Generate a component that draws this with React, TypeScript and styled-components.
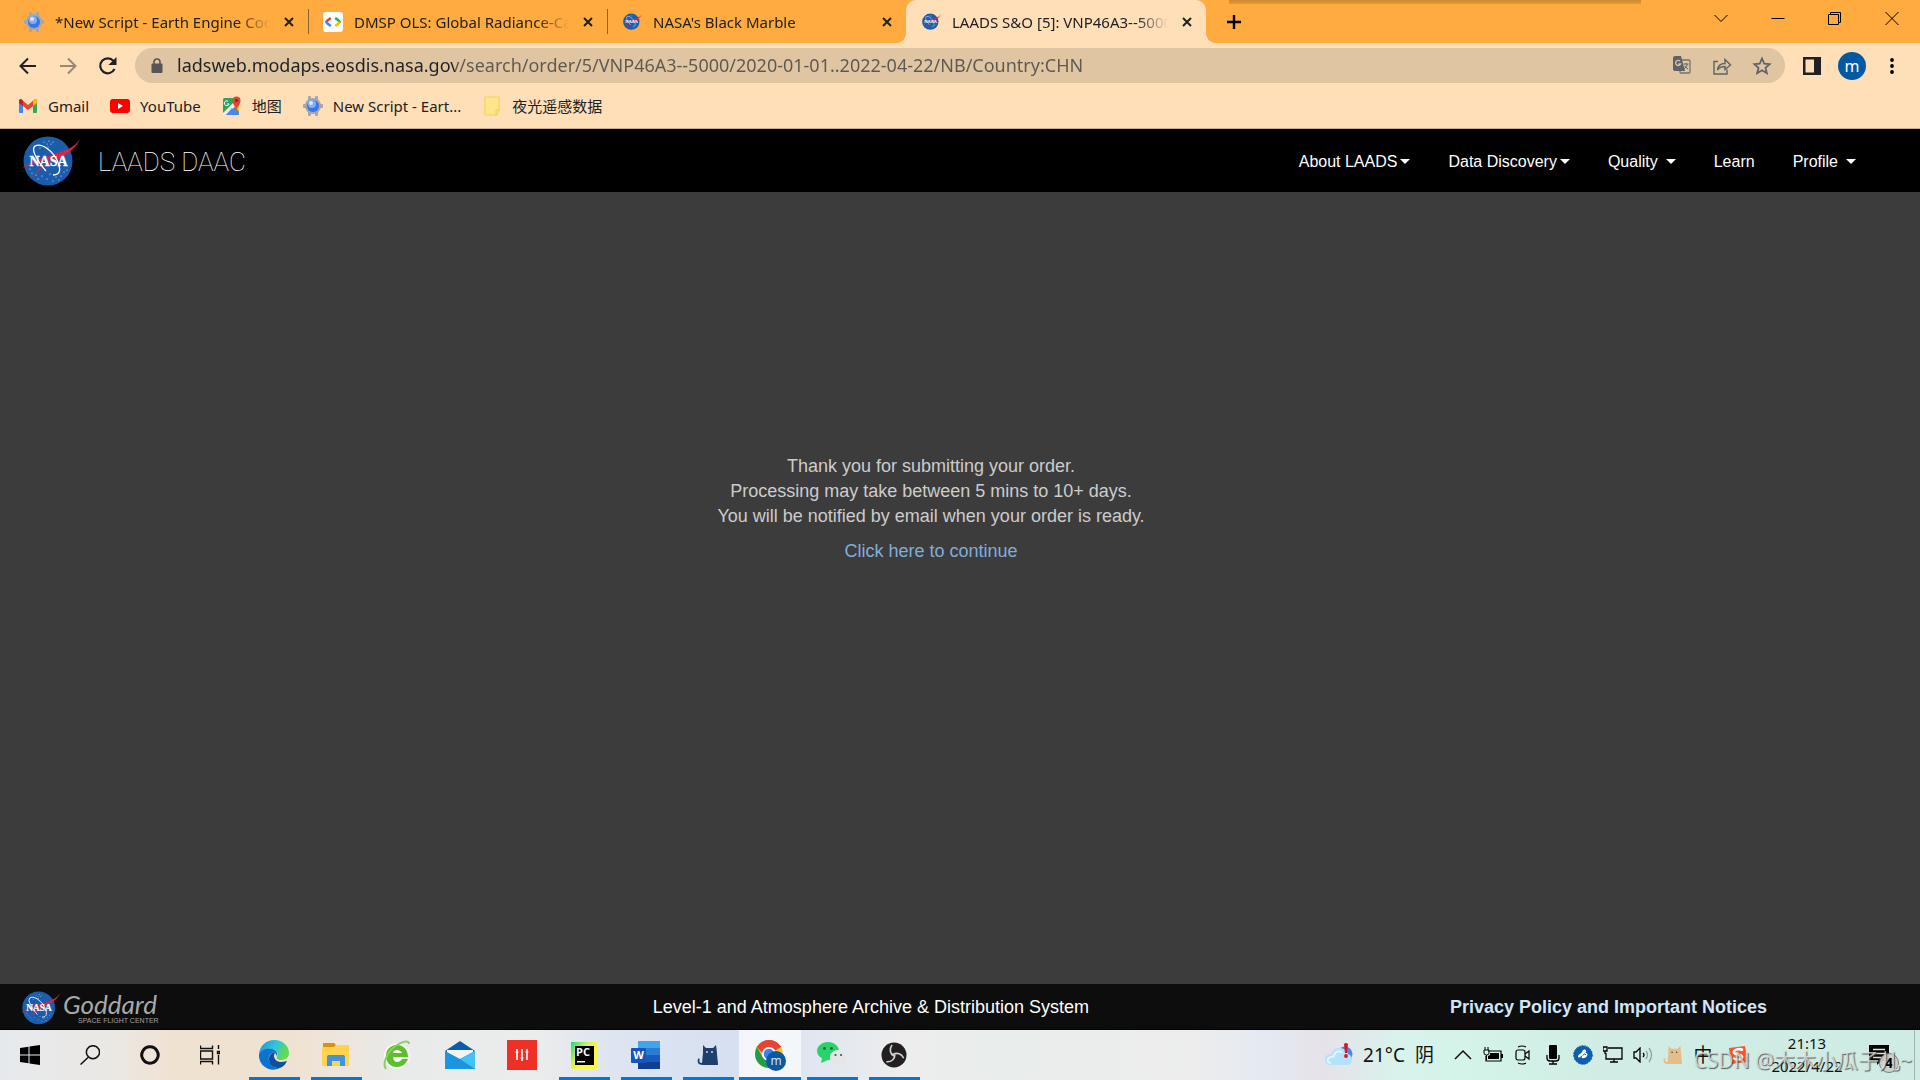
import React, { ReactNode } from "react";
import styled, { createGlobalStyle, css } from "styled-components";

const ui = `"Noto Sans", "Open Sans", "Noto Sans CJK SC", sans-serif`;
const sans = `"Liberation Sans", Arial, sans-serif`;

const GlobalStyle = createGlobalStyle`
  *, *::before, *::after { box-sizing: border-box; }
  body { margin: 0; background: #3c3c3c; font-family: ${ui}; }
  button { border: 0; padding: 0; margin: 0; background: none; font: inherit; color: inherit; cursor: pointer; }
  a { color: inherit; text-decoration: none; }
  svg { display: block; flex: none; }
`;

const Desktop = styled.div`
  position: relative;
  display: flex;
  flex-direction: column;
  min-height: 100vh;
`;

/* ---------- browser chrome ---------- */

const TabStrip = styled.div`
  position: relative;
  display: flex;
  height: 43px;
  background: #ffab40;
  padding-left: 9px;
`;

const WindowShadow = styled.div`
  position: absolute;
  top: 0;
  left: 64%;
  width: 412px;
  height: 4px;
  background: linear-gradient(#cc8833, #e59a3a);
`;

const Tab = styled.div<{ $active?: boolean; $divider?: boolean }>`
  position: relative;
  display: flex;
  align-items: center;
  width: ${(p) => (p.$active ? 300 : 299)}px;
  padding: 0 10px 0 15px;
  color: #202124;
  ${(p) =>
    p.$divider &&
    css`
      &::after {
        content: "";
        position: absolute;
        right: -1px;
        top: 9px;
        width: 1px;
        height: 25px;
        background: #8a6533;
      }
    `}
  ${(p) =>
    p.$active &&
    css`
      background: #ffdfb8;
      border-radius: 10px 10px 0 0;
      &::before,
      &::after {
        content: "";
        position: absolute;
        bottom: 0;
        width: 10px;
        height: 10px;
      }
      &::before {
        left: -10px;
        background: radial-gradient(circle at 0 0, #ffab40 10px, #ffdfb8 10px);
      }
      &::after {
        right: -10px;
        background: radial-gradient(circle at 100% 0, #ffab40 10px, #ffdfb8 10px);
      }
    `}
`;

const TabLabel = styled.button`
  display: flex;
  align-items: center;
  gap: 11px;
  flex: 1;
  min-width: 0;
  font-size: 15px;
  line-height: 20px;
  text-align: left;
`;

const TabTitle = styled.span`
  flex: 1;
  overflow: hidden;
  white-space: nowrap;
  mask-image: linear-gradient(to right, #000 calc(100% - 32px), transparent);
`;

const CloseButton = styled.button`
  display: grid;
  place-items: center;
  width: 18px;
  height: 18px;
  margin-left: 10px;
`;

const NewTab = styled.button`
  display: grid;
  place-items: center;
  width: 36px;
  margin-left: 10px;
`;

const WindowControls = styled.div`
  display: flex;
  margin-left: auto;
  height: 37px;
`;

const WindowButton = styled.button`
  display: grid;
  place-items: center;
  width: 57px;
`;

const Toolbar = styled.div`
  display: flex;
  align-items: center;
  height: 45px;
  padding: 0 8px;
  background: #ffdfb8;
  color: #202124;
`;

const ToolButton = styled.button<{ $dim?: boolean }>`
  display: grid;
  place-items: center;
  width: 40px;
  height: 35px;
  opacity: ${(p) => (p.$dim ? 0.45 : 1)};
`;

const Omnibox = styled.form`
  display: flex;
  align-items: center;
  flex: 1;
  height: 35px;
  margin: 0 7px;
  padding: 0 3px 0 16px;
  border-radius: 18px;
  background: #dfc5a2;
  color: #5f6368;
`;

const Address = styled.input`
  flex: 1;
  min-width: 0;
  height: 30px;
  margin-left: 14px;
  padding: 0 0 2px;
  border: 0;
  outline: 0;
  font-family: ${ui};
  font-size: 18px;
  background: linear-gradient(to right, #202124 278px, #5d5850 278px);
  background-clip: text;
  -webkit-text-fill-color: transparent;
`;

const Avatar = styled.span`
  display: grid;
  place-items: center;
  width: 28px;
  height: 28px;
  border-radius: 50%;
  background: #0159a3;
  color: #fff;
  font-size: 16px;
  line-height: 20px;
`;

const Bookmarks = styled.nav`
  display: flex;
  align-items: center;
  gap: 21px;
  height: 41px;
  padding: 0 18px 4px;
  background: #ffdfb8;
  border-bottom: 1px solid #c9b090;
`;

const Bookmark = styled.a`
  display: flex;
  align-items: center;
  gap: 10px;
  font-size: 15px;
  line-height: 20px;
  color: #202124;
  white-space: nowrap;
`;

/* ---------- web page ---------- */

const SiteHeader = styled.header`
  display: flex;
  align-items: center;
  justify-content: space-between;
  height: 63px;
  padding: 2px 64px 0 20px;
  background: #000;
  color: #fff;
  font-family: ${sans};
`;

const Brand = styled.a`
  display: flex;
  align-items: center;
  gap: 18px;
  font-family: Roboto, "Open Sans", sans-serif;
  font-weight: 100;
  font-size: 26px;
  line-height: 36px;
`;

const SiteNav = styled.nav`
  display: flex;
  gap: 38px;
  font-size: 16px;
  line-height: 20px;
`;

const NavItem = styled.button<{ $gap?: number }>`
  display: flex;
  align-items: center;
  gap: ${(p) => p.$gap ?? 0}px;
`;

const Caret = styled.span`
  border: 5px solid transparent;
  border-top-color: #fff;
  border-bottom: 0;
`;

const Main = styled.main`
  flex: 1;
  padding: 262px 58px 0 0;
  background: #3c3c3c;
  color: #ccc;
  font-family: ${sans};
  font-size: 18px;
  line-height: 25px;
  text-align: center;
`;

const Notice = styled.p`
  margin: 0 0 10px;
`;

const ContinueLink = styled.a`
  color: #80aed9;
`;

const SiteFooter = styled.footer`
  display: grid;
  grid-template-columns: 14fr auto 15fr;
  align-items: center;
  height: 46px;
  padding: 0 153px 0 20px;
  background: #0d0d0d;
  border-bottom: 1px solid #000;
  color: #fff;
  font-family: ${sans};
  font-size: 18px;
  line-height: 20px;
`;

const FooterLogos = styled.div`
  display: flex;
  align-items: center;
  gap: 2px;
  padding-top: 4px;
`;

const PolicyLink = styled.a`
  justify-self: end;
  font-weight: 700;
  color: #cfe5fa;
`;

/* ---------- taskbar ---------- */

const Taskbar = styled.div`
  display: flex;
  height: 50px;
  background: linear-gradient(
    to right,
    #e6e9ec 0,
    #ebe8e4 6%,
    #f0e2d1 9%,
    #f0e2d1 15%,
    #e9eaea 21%,
    #ebecec 28%,
    #dde5f1 32%,
    #d6e0f0 38%,
    #e2e8f0 43%,
    #ededed 47%,
    #e9edec 52%,
    #ededed 62%,
    #e4e9f2 66%,
    #e6e2e9 69%,
    #d8f3ec 73%,
    #d3f3e8 77%,
    #d0ece4 84%,
    #cfece4 100%
  );
  color: #111;
`;

const SystemButton = styled.button`
  display: grid;
  place-items: center;
  width: 60px;
`;

const Apps = styled.div`
  display: flex;
  margin-left: 3px;
`;

const AppButton = styled.button<{ $open?: boolean; $active?: boolean }>`
  position: relative;
  display: grid;
  place-items: center;
  width: 62px;
  background: ${(p) => (p.$active ? "rgba(255,255,255,0.68)" : "transparent")};
  &::after {
    content: "";
    position: absolute;
    bottom: 0;
    left: ${(p) => (p.$active ? 0 : 6)}px;
    right: ${(p) => (p.$active ? 0 : 5)}px;
    height: 3px;
    background: ${(p) => (p.$open ? "#0078d7" : "transparent")};
  }
`;

const Tray = styled.div`
  display: flex;
  align-items: center;
  margin-left: auto;
  padding-right: 5px;
`;

const Weather = styled.button`
  display: flex;
  align-items: center;
  gap: 10px;
  margin-right: 14px;
  font-size: 19px;
  line-height: 24px;
`;

const TrayButton = styled.button<{ $wide?: boolean }>`
  display: grid;
  place-items: center;
  width: ${(p) => (p.$wide ? 40 : 30)}px;
  height: 50px;
`;

const InputMode = styled.span`
  font-size: 19px;
  line-height: 24px;
`;

const Clock = styled.button`
  width: 98px;
  font-size: 15px;
  line-height: 23px;
`;

const ActionCenter = styled.button`
  display: flex;
  align-items: center;
  justify-content: center;
  width: 59px;
  height: 50px;
  border-right: 1px solid #9fb5af;
`;

const Watermark = styled.div`
  position: absolute;
  right: 8px;
  bottom: 6px;
  font-size: 21px;
  line-height: 28px;
  color: rgba(225, 232, 230, 0.75);
  text-shadow: 1px 1px 1px rgba(60, 60, 60, 0.8);
  pointer-events: none;
  white-space: nowrap;
`;

/* ---------- drawings ---------- */

const NasaLogo = ({ w, h }: { w: number; h: number }) => (
  <svg width={w} height={h} viewBox="0 0 60 52" aria-hidden="true">
    <circle cx="28" cy="25" r="24.5" fill="#1c5dab" />
    <g fill="#dbe7f5">
      {[
        [24, 6], [29, 5], [31, 8], [28, 11], [33, 6], [27, 8], [20, 12], [12, 37], [16, 39], [22, 40],
        [27, 43], [33, 45], [36, 41], [41, 40], [44, 36], [18, 43], [39, 44], [30, 38], [10, 33], [47, 34],
      ].map(([x, y]) => (
        <circle key={`${x}-${y}`} cx={x} cy={y} r="0.6" />
      ))}
    </g>
    <path d="M60 3C54 13 45 19 30 23C18 26 8 29 1 33C9 27 19 23 32 19C45 15 54 12 60 3Z" fill="#e8213c" />
    <path d="M60 3C57 11 47 19 34 25C22 31 12 39 7 47C14 36 22 30 33 23C45 16 55 12 60 3Z" fill="#e8213c" />
    <path d="M26 35C19 27 10 14 15 10C22 6 33 16 37 24C41 33 41 39 33 39" fill="none" stroke="#fff" strokeWidth="1.3" />
    <text x="28.5" y="30" textAnchor="middle" fontFamily="Liberation Serif, serif" fontWeight="700" fontSize="14" fill="#fff" stroke="#fff" strokeWidth="0.3">
      NASA
    </text>
  </svg>
);

const EarthEngine = () => (
  <svg width="20" height="22" viewBox="0 0 20 22" aria-hidden="true">
    <g fill="#a3a6ac">
      <circle cx="10" cy="11" r="8" />
      <rect x="5" y="1" width="3" height="20" rx="1" />
      <rect x="12" y="1" width="3" height="20" rx="1" />
      <rect x="0" y="9" width="20" height="4" rx="1" />
    </g>
    <circle cx="10" cy="11" r="6" fill="#3975e8" />
    <circle cx="9" cy="9" r="4" fill="#7fb0fb" />
    <circle cx="8" cy="8" r="2" fill="#d5e6ff" />
  </svg>
);

const DevSite = () => (
  <svg width="20" height="20" viewBox="0 0 20 20" aria-hidden="true">
    <rect width="20" height="20" rx="3" fill="#fff" />
    <g fill="none" strokeWidth="2.6">
      <path d="M7.8 6L4.8 8.2L3 10" stroke="#ea4335" />
      <path d="M2.6 9.2L4.8 11.8L7.8 14" stroke="#4285f4" />
      <path d="M12.2 6L15.2 8.2L17.4 10.8" stroke="#34a853" />
      <path d="M16.8 10L15.2 11.8L12.2 14" stroke="#fbbc04" />
    </g>
  </svg>
);

const Cross = () => (
  <svg width="10" height="10" viewBox="0 0 10 10" aria-hidden="true">
    <path d="M1 1L9 9M9 1L1 9" stroke="#202124" strokeWidth="2" />
  </svg>
);

const Line = ({ d, s = 20, w = 2, fill = "none" }: { d: string; s?: number; w?: number; fill?: string }) => (
  <svg width={s} height={s} viewBox="0 0 20 20" aria-hidden="true">
    <path d={d} fill={fill} stroke="currentColor" strokeWidth={w} />
  </svg>
);

const Gmail = () => (
  <svg width="20" height="16" viewBox="0 0 20 16" aria-hidden="true">
    <path d="M1 3V14Q1 15 2 15H5V6Z" fill="#4285f4" />
    <path d="M19 3V14Q19 15 18 15H15V6Z" fill="#34a853" />
    <path d="M1 3Q1 1 3 1L10 7L17 1Q19 1 19 3V5L10 12L1 5Z" fill="#ea4335" />
    <path d="M15 3L17 1Q19 1 19 3V5L15 8Z" fill="#fbbc04" />
    <path d="M1 5V3Q1 1 3 1L5 3V8Z" fill="#c5221f" />
  </svg>
);

const YouTube = () => (
  <svg width="20" height="14" viewBox="0 0 20 14" aria-hidden="true">
    <rect width="20" height="14" rx="3" fill="#f00" />
    <path d="M8 4L13 7L8 10Z" fill="#fff" />
  </svg>
);

const Maps = () => (
  <svg width="20" height="20" viewBox="0 0 20 20" aria-hidden="true">
    <rect x="1" y="2" width="16" height="17" rx="1.5" fill="#2fa35c" />
    <path d="M2 19L10 10L17 17V19Z" fill="#4a86ee" />
    <path d="M1 17L15 3L18 6L4 19H1Z" fill="#f3efe4" />
    <path d="M4 19L10 12L16 19Z" fill="#4a86ee" />
    <path d="M6 5.2A2.4 2.4 0 1 0 7 8H5" fill="none" stroke="#fff" strokeWidth="1" />
    <path d="M12 10L17 16V10L14 8Z" fill="#f4b83a" />
    <path d="M14.5 14C14 10 10.5 9 10.5 4.5A4 4 0 0 1 18.5 4.5C18.5 9 15 10 14.5 14Z" fill="#e04536" />
    <circle cx="14.5" cy="4.5" r="1.4" fill="#8c1d14" />
  </svg>
);

const Note = () => (
  <svg width="20" height="20" viewBox="0 0 20 20" aria-hidden="true">
    <path d="M3 1H17V14L15 19H3Z" fill="#ffe58a" stroke="#f2cf55" />
    <path d="M14 19V14H17" fill="none" stroke="#f2cf55" />
  </svg>
);

const Translate = () => (
  <svg width="18" height="19" viewBox="0 0 18 19" aria-hidden="true">
    <rect x="7" y="4" width="10" height="13" rx="1" fill="none" stroke="#77736b" strokeWidth="1.3" />
    <path d="M2 0H8L12 15H2Q0 15 0 13V2Q0 0 2 0Z" fill="#5f6368" />
    <path d="M7 5A2.6 2.6 0 1 0 7.6 8H5.4" fill="none" stroke="#dfc5a2" strokeWidth="1.3" />
    <path d="M10.5 8H15.5M13 7V8M14.5 8Q13.5 11 11 13M11.5 10L15 13" fill="none" stroke="#5f6368" />
  </svg>
);

const Goddard = () => (
  <svg width="98" height="40" viewBox="0 0 98 40" aria-hidden="true">
    <text x="1" y="25" fontFamily="Lato, sans-serif" fontStyle="italic" fontWeight="400" fontSize="26" fill="#a8a8a8">
      Goddard
    </text>
    <text x="16" y="34" fontFamily="Liberation Sans, sans-serif" fontSize="7" fill="#a0a0a0">
      SPACE FLIGHT CENTER
    </text>
  </svg>
);

const WindowsLogo = () => (
  <svg width="20" height="20" viewBox="0 0 20 20" aria-hidden="true">
    <path d="M0 3L8.5 1.8V9.5H0ZM9.5 1.6L20 0V9.5H9.5ZM0 10.5H8.5V18.2L0 17ZM9.5 10.5H20V20L9.5 18.4Z" />
  </svg>
);

const Edge = () => (
  <svg width="30" height="30" viewBox="0 0 30 30" aria-hidden="true">
    <defs>
      <linearGradient id="edgeTop" x1="0" x2="1" y2="0.4">
        <stop offset="0" stopColor="#1693d8" />
        <stop offset="0.55" stopColor="#2fc3df" />
        <stop offset="1" stopColor="#63dc4d" />
      </linearGradient>
    </defs>
    <path d="M0 14C1 5 8 0 15 0C24 0 30 6 30 13C30 18 26 20 22 20C18 20 17 18 18 16C20 13 17 9 12 9C6 9 1 12 0 14Z" fill="url(#edgeTop)" />
    <path d="M0 14C2 10 7 8 12 9C16 9 19 12 18 16L16 13C12 12 9 16 10 20C11 26 17 29 21 28C11 33 -1 26 0 14Z" fill="#0c72cf" />
    <path d="M10 19C10 15 13 12 16 13C13 17 17 22 22 22C25 22 27 21 28 21C26 26 21 29 18 28C13 27 10 24 10 19Z" fill="#0f4f9e" />
  </svg>
);

const Explorer = () => (
  <svg width="28" height="24" viewBox="0 0 28 24" aria-hidden="true">
    <path d="M1 0H12L14 2L12 5H1Z" fill="#d9930b" />
    <path d="M0 4H12L14 2H27V23H0Z" fill="#ffd24f" />
    <path d="M5 23V14Q5 12 7 12H21Q23 12 23 14V23H18V18H10V23Z" fill="#3f95dd" />
  </svg>
);

const GreenBrowser = () => (
  <svg width="30" height="30" viewBox="0 0 30 30" aria-hidden="true">
    <circle cx="14" cy="16" r="13" fill="#f7faf5" />
    <path d="M19 19H25C23 24 19 27 14 27C7 27 3 22 3 16C3 9 8 5 14 5C21 5 25 10 25 17H10C10 20 12 22 14 22C16 22 18 21 19 19ZM10 13H19C18 11 16 10 14 10C12 10 10 11 10 13Z" fill="#5bc02b" />
    <path d="M3 29C-1 24 4 11 14 5C20 1 26 0 26 4" fill="none" stroke="#8ad063" strokeWidth="2" />
  </svg>
);

const Mail = () => (
  <svg width="30" height="28" viewBox="0 0 30 28" aria-hidden="true">
    <path d="M0 10L15 0L30 10L15 20Z" fill="#0b5cad" />
    <path d="M2 9H28V18H2Z" fill="#f4f4f4" />
    <path d="M0 10L15 18L30 10V28H0Z" fill="#1c95e0" />
    <path d="M30 10V28L15 18Z" fill="#42c2f5" />
  </svg>
);

const Sliders = () => (
  <svg width="30" height="30" viewBox="0 0 30 30" aria-hidden="true">
    <rect width="30" height="30" fill="#ee3026" />
    <g stroke="#fff" strokeWidth="1.6">
      <path d="M10 9V20M15 9V21M20 9V20" />
      <path d="M8.5 12H11.5M13.5 18H16.5M18.5 12H21.5" strokeWidth="1" />
    </g>
  </svg>
);

const PyCharm = () => (
  <svg width="27" height="27" viewBox="0 0 27 27" aria-hidden="true">
    <defs>
      <linearGradient id="pc" x2="0.7" y2="0.5">
        <stop stopColor="#21d789" />
        <stop offset="0.6" stopColor="#d5f05a" />
        <stop offset="1" stopColor="#fcf84a" />
      </linearGradient>
    </defs>
    <rect width="27" height="27" fill="url(#pc)" />
    <rect x="4" y="4" width="19" height="19" fill="#000" />
    <text x="5" y="14" fontFamily="Open Sans, sans-serif" fontWeight="700" fontSize="11" fill="#fff">PC</text>
    <rect x="6" y="19" width="8" height="1.5" fill="#fff" />
  </svg>
);

const Word = () => (
  <svg width="30" height="28" viewBox="0 0 30 28" aria-hidden="true">
    <rect x="7" width="22" height="7" fill="#41a5ee" />
    <rect x="7" y="7" width="22" height="7" fill="#2b7cd3" />
    <rect x="7" y="14" width="22" height="7" fill="#185abd" />
    <rect x="7" y="21" width="22" height="7" fill="#103f91" />
    <rect y="7" width="15" height="15" rx="1" fill="#1756b8" />
    <text x="7.5" y="18" textAnchor="middle" fontFamily="Open Sans, sans-serif" fontWeight="700" fontSize="11" fill="#fff">W</text>
  </svg>
);

const Cat = ({ color, eyes, w }: { color: string; eyes: string; w: number }) => (
  <svg width={w} height={w} viewBox="0 0 22 22" aria-hidden="true">
    <path d="M6 1L9 4H16L19 1L20 9C20 13 21 17 21 21H6C1 21 0 18 1 15C2 14 3 15 2.5 16C2 18 3 19 5 19L6 9Z" fill={color} />
    <circle cx="10" cy="8" r="0.9" fill={eyes} />
    <circle cx="15" cy="8" r="0.9" fill={eyes} />
  </svg>
);

const Chrome = () => (
  <svg width="31" height="31" viewBox="0 0 31 31" aria-hidden="true">
    <circle cx="14" cy="14" r="14" fill="#fcc934" />
    <path d="M14 14L1.9 7A14 14 0 0 1 26.1 7Z" fill="#ea4335" />
    <path d="M14 7H26.1A14 14 0 0 0 1.9 7L8 14Z" fill="#ea4335" />
    <path d="M1.9 7A14 14 0 0 0 14 28L20 18L8 17.5Z" fill="#249a4b" />
    <circle cx="14" cy="14" r="7" fill="#fff" />
    <circle cx="14" cy="14" r="5.3" fill="#3b80ee" />
    <circle cx="21" cy="21" r="10" fill="#0b5aa0" />
    <text x="21" y="25" textAnchor="middle" fontFamily="Open Sans, sans-serif" fontSize="12" fill="#d9ecff">m</text>
  </svg>
);

const WeChat = () => (
  <svg width="30" height="26" viewBox="0 0 30 26" aria-hidden="true">
    <path d="M11 0C17 0 22 4 22 9C22 14 17 18 11 18L4 21L5 16C2 15 0 12 0 9C0 4 5 0 11 0Z" fill="#27d36a" />
    <path d="M21 8C26 8 30 11 30 15C30 18 29 20 27 21L28 25L23 23C17 23 13 20 13 15C13 11 17 8 21 8Z" fill="#e6e6e6" />
    <g fill="#33613f">
      <circle cx="7.5" cy="6.5" r="1.4" />
      <circle cx="14.5" cy="6.5" r="1.4" />
      <circle cx="18.5" cy="13" r="1.1" />
      <circle cx="24" cy="13" r="1.1" />
    </g>
  </svg>
);

const Obs = () => (
  <svg width="26" height="26" viewBox="0 0 26 26" aria-hidden="true">
    <circle cx="13" cy="13" r="12.5" fill="#221f20" />
    <g fill="none" stroke="#d5d5d5" strokeWidth="1.6">
      {[0, 120, 240].map((a) => (
        <path key={a} d="M13 14C9 12 8 7 11 3" transform={`rotate(${a} 13 13)`} />
      ))}
    </g>
  </svg>
);

const Cloud = () => (
  <svg width="28" height="24" viewBox="0 0 28 24" aria-hidden="true">
    <circle cx="20" cy="11" r="7.5" fill="#3b91dc" />
    <path d="M6 22C2 22 0 20 0 17C0 13 3 11 6 11C8 6 12 4 16 5C20 6 22 8 23 11C26 12 27 14 27 17C27 20 25 22 22 22Z" fill="#b5e2fb" />
    <path d="M6 20C3 20 2 18 3 16C5 13 8 14 9 13C10 8 15 7 17 10" fill="none" stroke="#e0f5ff" strokeWidth="2" />
    <path d="M19 1Q21 -1 23 1L22 10H20Z" fill="#e0112b" />
    <circle cx="21" cy="13" r="1.9" fill="#e0112b" />
  </svg>
);

const Battery = () => (
  <svg width="20" height="16" viewBox="0 0 20 16" aria-hidden="true">
    <path d="M5 4H18V14H3V9" fill="none" stroke="#000" strokeWidth="1.2" />
    <path d="M7 6H16V12H5V9L7 8Z" />
    <rect x="18" y="7" width="2" height="4" />
    <path d="M1 3H6V6Q6 8 3.5 8Q1 8 1 6ZM2 0V3M5 0V3M3.5 8V13" stroke="#000" fill="none" />
  </svg>
);

const Camera = () => (
  <svg width="16" height="20" viewBox="0 0 16 20" aria-hidden="true">
    <g fill="none" stroke="#000" strokeWidth="1.2">
      <rect x="1" y="5" width="9" height="10" rx="2" />
      <path d="M10 9L14 6V14L10 11M3 2Q7 0 11 2M3 18Q7 20 11 18" />
    </g>
  </svg>
);

const Mic = () => (
  <svg width="14" height="20" viewBox="0 0 14 20" aria-hidden="true">
    <rect x="3" width="8" height="14" rx="1" />
    <path d="M1 10V13Q1 16 4 16H10Q13 16 13 13V10M7 16V19M3 19H11" fill="none" stroke="#000" strokeWidth="1.3" />
  </svg>
);

const BlueBird = () => (
  <svg width="20" height="20" viewBox="0 0 20 20" aria-hidden="true">
    <circle cx="10" cy="10" r="9.3" fill="#0b5fae" stroke="#0b5fae" strokeDasharray="2 1" />
    <path d="M5 12C5 9 8 9 9 7C10 4 13 4 13 6C14 6 12 8 13 8C16 8 14 13 11 13C8 14 8 12 10 10C8 10 7 14 5 12Z" fill="#fff" />
    <path d="M10 10Q12 8 13 10" fill="none" stroke="#0b5fae" />
  </svg>
);

const Monitor = () => (
  <svg width="20" height="18" viewBox="0 0 20 18" aria-hidden="true">
    <path d="M5 2H19V13H3V7M7 16H15M11 13V16M0 1H4V5H0ZM2 5V8" fill="none" stroke="#000" strokeWidth="1.3" />
  </svg>
);

const Volume = () => (
  <svg width="20" height="16" viewBox="0 0 20 16" aria-hidden="true">
    <g fill="none" strokeWidth="1.3">
      <path d="M1 5H3L7 1V15L3 11H1ZM10 6Q12 8 10 10" stroke="#000" />
      <path d="M13 4Q16 8 13 12M16 1Q21 8 16 15" stroke="#8aa39c" />
    </g>
  </svg>
);

const Sogou = () => (
  <svg width="20" height="20" viewBox="0 0 20 20" aria-hidden="true">
    <path d="M1 3L17 1L20 17L3 19Z" fill="#f4572a" />
    <path d="M15 5C10 3 5 5 6 8C7 10 14 9 14 12C14 15 8 15 5 13" fill="none" stroke="#fff" strokeWidth="2.6" />
  </svg>
);

const Notifications = () => (
  <svg width="32" height="36" viewBox="0 0 32 36" aria-hidden="true">
    <path d="M0 8H20V24H12L8 28V24H0Z" />
    <path d="M4 12.5H16M4 16.5H16M4 20.5H12" stroke="#d8e8e4" strokeWidth="1.3" />
    <circle cx="20" cy="26" r="9.5" fill="#c9cfcd" fillOpacity="0.92" stroke="#77807d" />
    <text x="20" y="31" textAnchor="middle" fontFamily="Open Sans, sans-serif" fontWeight="700" fontSize="14">4</text>
  </svg>
);

/* ---------- data ---------- */

interface TabInfo {
  title: string;
  icon: ReactNode;
  divider?: boolean;
  active?: boolean;
}

const tabs: TabInfo[] = [
  { title: "*New Script - Earth Engine Code", icon: <EarthEngine />, divider: true },
  { title: "DMSP OLS: Global Radiance-Ca", icon: <DevSite />, divider: true },
  { title: "NASA's Black Marble", icon: <NasaLogo w={20} h={18} /> },
  { title: "LAADS S&O [5]: VNP46A3--5000", icon: <NasaLogo w={20} h={18} />, active: true },
];

const bookmarks = [
  { label: "Gmail", icon: <Gmail /> },
  { label: "YouTube", icon: <YouTube /> },
  { label: "地图", icon: <Maps /> },
  { label: "New Script - Eart...", icon: <EarthEngine /> },
  { label: "夜光遥感数据", icon: <Note /> },
];

const menu = [
  { label: "About LAADS", caret: true, gap: 3 },
  { label: "Data Discovery", caret: true, gap: 3 },
  { label: "Quality", caret: true, gap: 8 },
  { label: "Learn", caret: false, gap: 0 },
  { label: "Profile", caret: true, gap: 8 },
];

const apps = [
  { name: "Edge", icon: <Edge />, open: true },
  { name: "File Explorer", icon: <Explorer />, open: true },
  { name: "Browser", icon: <GreenBrowser /> },
  { name: "Mail", icon: <Mail /> },
  { name: "Mixer", icon: <Sliders /> },
  { name: "PyCharm", icon: <PyCharm />, open: true },
  { name: "Word", icon: <Word />, open: true },
  { name: "Clash", icon: <Cat color="#1f3f6e" eyes="#f4e9d2" w={22} />, open: true },
  { name: "Chrome", icon: <Chrome />, open: true, active: true },
  { name: "WeChat", icon: <WeChat />, open: true },
  { name: "OBS", icon: <Obs />, open: true },
];

const tray = [
  { name: "Show hidden icons", icon: <Line d="M2 14L10 6L18 14" w={1.5} /> },
  { name: "Battery", icon: <Battery /> },
  { name: "Camera", icon: <Camera /> },
  { name: "Microphone", icon: <Mic /> },
  { name: "Assistant", icon: <BlueBird /> },
  { name: "Network", icon: <Monitor /> },
  { name: "Volume", icon: <Volume /> },
  { name: "Cat", icon: <Cat color="#e3bd8a" eyes="#5b452c" w={20} /> },
];

export default function App() {
  return (
    <Desktop>
      <GlobalStyle />
      <TabStrip>
        <WindowShadow />
        {tabs.map((t) => (
          <Tab key={t.title} $active={t.active} $divider={t.divider}>
            <TabLabel>
              {t.icon}
              <TabTitle>{t.title}</TabTitle>
            </TabLabel>
            <CloseButton aria-label="Close tab">
              <Cross />
            </CloseButton>
          </Tab>
        ))}
        <NewTab aria-label="New tab">
          <Line d="M10 3V17M3 10H17" w={2.4} />
        </NewTab>
        <WindowControls>
          <WindowButton aria-label="Search tabs">
            <Line d="M3.5 6L10 12.5L16.5 6" w={1} />
          </WindowButton>
          <WindowButton aria-label="Minimize">
            <Line d="M3.5 9.5H16.5" w={1} />
          </WindowButton>
          <WindowButton aria-label="Restore">
            <Line d="M3.5 5.5H13.5V15.5H3.5ZM5.5 5V3.5H15.5V13.5H14" w={1} />
          </WindowButton>
          <WindowButton aria-label="Close">
            <Line d="M3.5 3L16.5 16M16.5 3L3.5 16" w={1} />
          </WindowButton>
        </WindowControls>
      </TabStrip>

      <Toolbar>
        <ToolButton aria-label="Back">
          <Line d="M18 10H3M10 2.5L2.5 10L10 17.5" />
        </ToolButton>
        <ToolButton aria-label="Forward" $dim>
          <Line d="M2 10H17M10 2.5L17.5 10L10 17.5" />
        </ToolButton>
        <ToolButton aria-label="Reload">
          <svg width="20" height="20" viewBox="0 0 20 20" aria-hidden="true">
            <path d="M16.5 13A7.5 7.5 0 1 1 15.5 5" fill="none" stroke="currentColor" strokeWidth="2.2" />
            <path d="M18.5 1V9H10.5Z" fill="currentColor" />
          </svg>
        </ToolButton>
        <Omnibox>
          <svg width="12" height="16" viewBox="0 0 12 16" aria-hidden="true">
            <rect x="0.5" y="5.5" width="11" height="9.5" rx="1" fill="#55565a" />
            <path d="M3 6V4A3 3 0 0 1 9 4V6" fill="none" stroke="#55565a" strokeWidth="1.6" />
          </svg>
          <Address
            aria-label="Address"
            readOnly
            value="ladsweb.modaps.eosdis.nasa.gov/search/order/5/VNP46A3--5000/2020-01-01..2022-04-22/NB/Country:CHN"
          />
          <ToolButton type="button" aria-label="Translate">
            <Translate />
          </ToolButton>
          <ToolButton type="button" aria-label="Share">
            <Line d="M6 5.5H2V18H15V13.5M5.5 14C6 9.5 9 7.5 13 7.5V3.5L18.5 9L13 13.5V10.5C10 10.5 7.5 11 5.5 14Z" w={1.4} />
          </ToolButton>
          <ToolButton type="button" aria-label="Bookmark">
            <Line d="M10 2.5L12.2 7.7L17.6 8.2L13.5 11.8L14.8 17.2L10 14.3L5.2 17.2L6.5 11.8L2.4 8.2L7.8 7.7Z" w={1.8} />
          </ToolButton>
        </Omnibox>
        <ToolButton aria-label="Side panel">
          <svg width="18" height="18" viewBox="0 0 18 18" aria-hidden="true">
            <path d="M0 0H18V18H0ZM2.5 2.5V15.5H11V2.5Z" fill="#202124" fillRule="evenodd" />
          </svg>
        </ToolButton>
        <ToolButton aria-label="Account">
          <Avatar>m</Avatar>
        </ToolButton>
        <ToolButton aria-label="Menu">
          <svg width="4" height="18" viewBox="0 0 4 18" aria-hidden="true">
            <circle cx="2" cy="3" r="1.9" />
            <circle cx="2" cy="9" r="1.9" />
            <circle cx="2" cy="15" r="1.9" />
          </svg>
        </ToolButton>
      </Toolbar>

      <Bookmarks aria-label="Bookmarks">
        {bookmarks.map((b) => (
          <Bookmark key={b.label} href="#">
            {b.icon}
            {b.label}
          </Bookmark>
        ))}
      </Bookmarks>

      <SiteHeader>
        <Brand href="#">
          <NasaLogo w={60} h={52} />
          LAADS DAAC
        </Brand>
        <SiteNav>
          {menu.map((m) => (
            <NavItem key={m.label} $gap={m.gap}>
              {m.label}
              {m.caret && <Caret />}
            </NavItem>
          ))}
        </SiteNav>
      </SiteHeader>

      <Main>
        <Notice>
          Thank you for submitting your order.
          <br />
          Processing may take between 5 mins to 10+ days.
          <br />
          You will be notified by email when your order is ready.
        </Notice>
        <ContinueLink href="#">Click here to continue</ContinueLink>
      </Main>

      <SiteFooter>
        <FooterLogos>
          <NasaLogo w={40} h={35} />
          <Goddard />
        </FooterLogos>
        <span>Level-1 and Atmosphere Archive &amp; Distribution System</span>
        <PolicyLink href="#">Privacy Policy and Important Notices</PolicyLink>
      </SiteFooter>

      <Taskbar>
        <SystemButton aria-label="Start">
          <WindowsLogo />
        </SystemButton>
        <SystemButton aria-label="Search">
          <Line d="M0.5 19.5L8 12.5M13 0.7A6.5 6.5 0 1 1 12.9 0.7Z" w={1.5} />
        </SystemButton>
        <SystemButton aria-label="Cortana">
          <Line d="M10 1.8A8.2 8.2 0 1 1 9.9 1.8Z" w={3} />
        </SystemButton>
        <SystemButton aria-label="Task view">
          <Line d="M0.5 0.5V3.5H12.5V0.5M0.5 6H12.5V14H0.5ZM0.5 19.5V16.5H12.5V19.5M18.5 0V4M18.5 10V19.5M17.5 6.5H19.5V8.5H17.5Z" w={1.4} />
        </SystemButton>
        <Apps>
          {apps.map((a) => (
            <AppButton key={a.name} aria-label={a.name} $open={a.open} $active={a.active}>
              {a.icon}
            </AppButton>
          ))}
        </Apps>
        <Tray>
          <Weather>
            <Cloud />
            <span>21°C</span>
            <span>阴</span>
          </Weather>
          {tray.map((t) => (
            <TrayButton key={t.name} aria-label={t.name}>
              {t.icon}
            </TrayButton>
          ))}
          <TrayButton>
            <InputMode>中</InputMode>
          </TrayButton>
          <TrayButton aria-label="Sogou input" $wide>
            <Sogou />
          </TrayButton>
          <Clock>
            21:13
            <br />
            2022/4/22
          </Clock>
          <ActionCenter aria-label="Notifications">
            <Notifications />
          </ActionCenter>
        </Tray>
      </Taskbar>
      <Watermark>CSDN @木木小瓜子儿~</Watermark>
    </Desktop>
  );
}
